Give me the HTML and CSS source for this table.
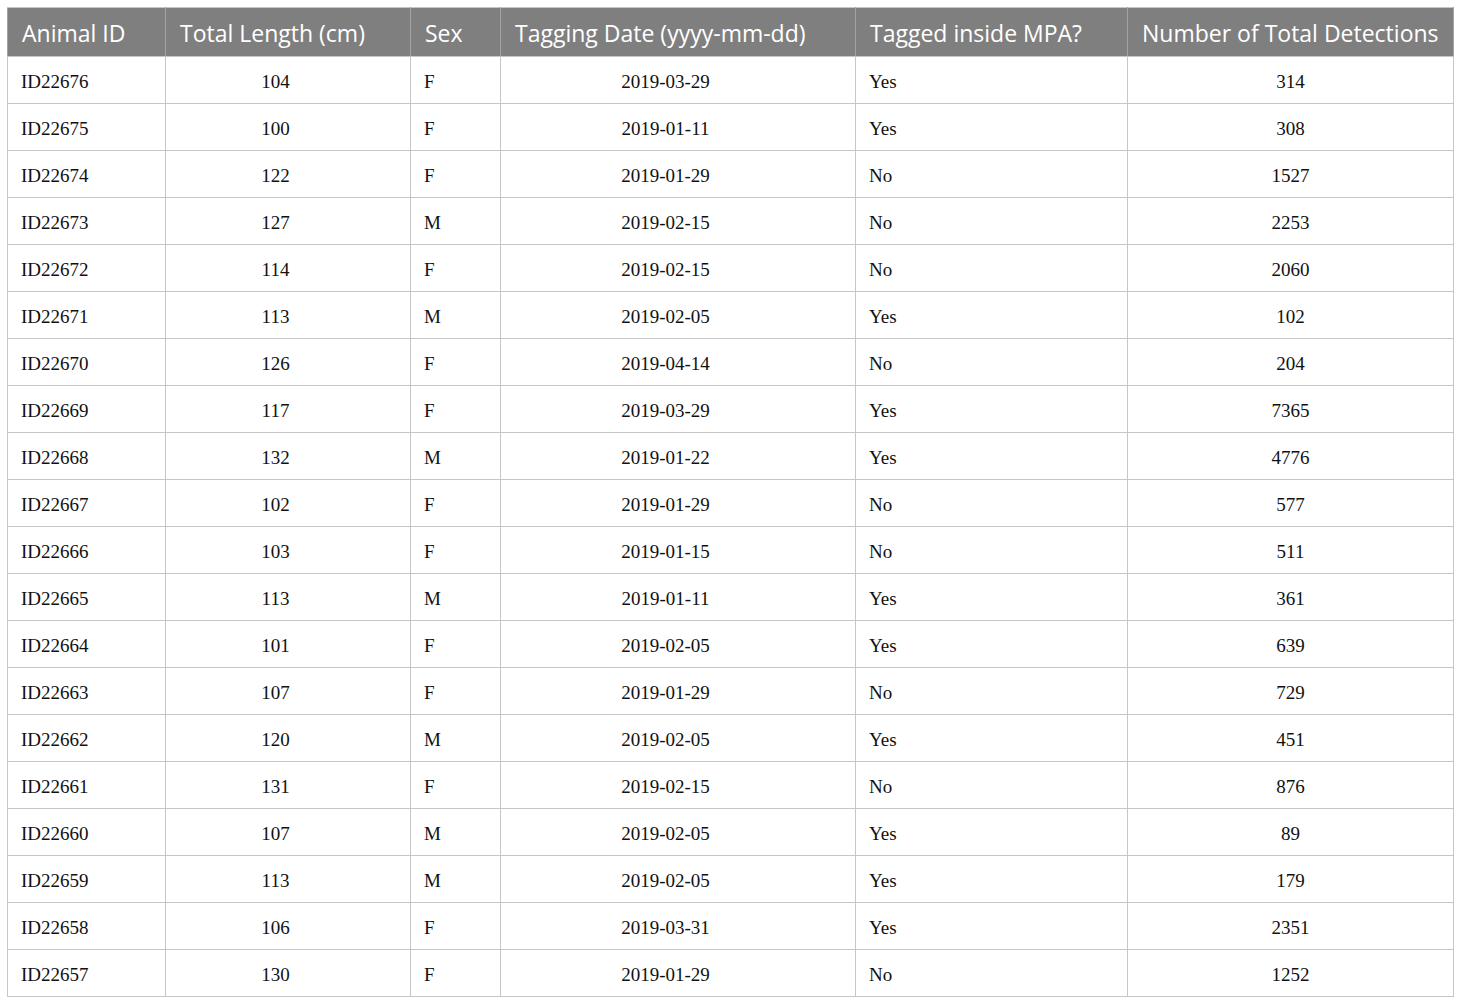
FILE: index.html
```html
<!DOCTYPE html>
<html>
<head>
<meta charset="utf-8">
<link rel="stylesheet" href="styles.css">
</head>
<body>
<table class="data">
<colgroup>
<col class="c1"><col class="c2"><col class="c3"><col class="c4"><col class="c5"><col class="c6">
</colgroup>
<thead>
<tr><th>Animal ID</th><th>Total Length (cm)</th><th>Sex</th><th>Tagging Date (yyyy-mm-dd)</th><th>Tagged inside MPA?</th><th>Number of Total Detections</th></tr>
</thead>
<tbody>
<tr><td>ID22676</td><td class="ctr off">104</td><td>F</td><td class="ctr off">2019-03-29</td><td>Yes</td><td class="ctr">314</td></tr>
<tr><td>ID22675</td><td class="ctr off">100</td><td>F</td><td class="ctr off">2019-01-11</td><td>Yes</td><td class="ctr">308</td></tr>
<tr><td>ID22674</td><td class="ctr off">122</td><td>F</td><td class="ctr off">2019-01-29</td><td>No</td><td class="ctr">1527</td></tr>
<tr><td>ID22673</td><td class="ctr off">127</td><td>M</td><td class="ctr off">2019-02-15</td><td>No</td><td class="ctr">2253</td></tr>
<tr><td>ID22672</td><td class="ctr off">114</td><td>F</td><td class="ctr off">2019-02-15</td><td>No</td><td class="ctr">2060</td></tr>
<tr><td>ID22671</td><td class="ctr off">113</td><td>M</td><td class="ctr off">2019-02-05</td><td>Yes</td><td class="ctr">102</td></tr>
<tr><td>ID22670</td><td class="ctr off">126</td><td>F</td><td class="ctr off">2019-04-14</td><td>No</td><td class="ctr">204</td></tr>
<tr><td>ID22669</td><td class="ctr off">117</td><td>F</td><td class="ctr off">2019-03-29</td><td>Yes</td><td class="ctr">7365</td></tr>
<tr><td>ID22668</td><td class="ctr off">132</td><td>M</td><td class="ctr off">2019-01-22</td><td>Yes</td><td class="ctr">4776</td></tr>
<tr><td>ID22667</td><td class="ctr off">102</td><td>F</td><td class="ctr off">2019-01-29</td><td>No</td><td class="ctr">577</td></tr>
<tr><td>ID22666</td><td class="ctr off">103</td><td>F</td><td class="ctr off">2019-01-15</td><td>No</td><td class="ctr">511</td></tr>
<tr><td>ID22665</td><td class="ctr off">113</td><td>M</td><td class="ctr off">2019-01-11</td><td>Yes</td><td class="ctr">361</td></tr>
<tr><td>ID22664</td><td class="ctr off">101</td><td>F</td><td class="ctr off">2019-02-05</td><td>Yes</td><td class="ctr">639</td></tr>
<tr><td>ID22663</td><td class="ctr off">107</td><td>F</td><td class="ctr off">2019-01-29</td><td>No</td><td class="ctr">729</td></tr>
<tr><td>ID22662</td><td class="ctr off">120</td><td>M</td><td class="ctr off">2019-02-05</td><td>Yes</td><td class="ctr">451</td></tr>
<tr><td>ID22661</td><td class="ctr off">131</td><td>F</td><td class="ctr off">2019-02-15</td><td>No</td><td class="ctr">876</td></tr>
<tr><td>ID22660</td><td class="ctr off">107</td><td>M</td><td class="ctr off">2019-02-05</td><td>Yes</td><td class="ctr">89</td></tr>
<tr><td>ID22659</td><td class="ctr off">113</td><td>M</td><td class="ctr off">2019-02-05</td><td>Yes</td><td class="ctr">179</td></tr>
<tr><td>ID22658</td><td class="ctr off">106</td><td>F</td><td class="ctr off">2019-03-31</td><td>Yes</td><td class="ctr">2351</td></tr>
<tr><td>ID22657</td><td class="ctr off">130</td><td>F</td><td class="ctr off">2019-01-29</td><td>No</td><td class="ctr">1252</td></tr>
</tbody>
</table>
</body>
</html>
```
FILE: styles.css
```css
html, body {
  margin: 0;
  padding: 0;
  background: #ffffff;
}
body {
  padding: 7px 0 0 7px;
}
.data {
  border-collapse: collapse;
  table-layout: fixed;
  width: 1446px;
  border: 1px solid #c6c6c6;
}
.c1 { width: 158px; }
.c2 { width: 245px; }
.c3 { width: 90px; }
.c4 { width: 355px; }
.c5 { width: 272px; }
.c6 { width: 326px; }
.data th {
  background: #7f7f7f;
  color: #ffffff;
  font-family: "Open Sans", "Noto Sans", sans-serif;
  font-weight: normal;
  font-size: 23px;
  text-align: left;
  height: 49px;
  padding: 2px 0 0 14px;
  border: 1px solid #a3a3a3;
  border-top-color: #c6c6c6;
  border-bottom-color: #c6c6c6;
  white-space: nowrap;
  box-sizing: border-box;
}
.data td {
  font-family: "Liberation Serif", "Times New Roman", serif;
  font-size: 19px;
  color: #111111;
  height: 47px;
  padding: 3px 0 0 13px;
  border: 1px solid #c6c6c6;
  box-sizing: border-box;
}
.data td.ctr {
  text-align: center;
  padding: 3px 0 0 0;
}
.data td.ctr.off {
  padding-right: 25px;
}
```
